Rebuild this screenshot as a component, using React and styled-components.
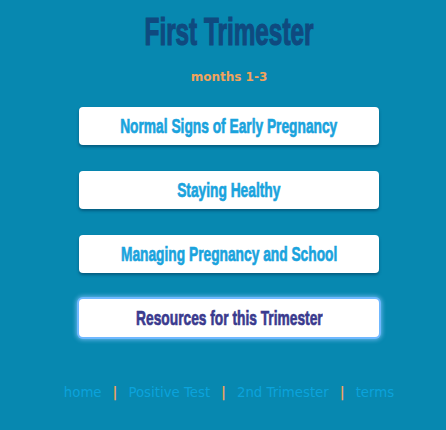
import React from "react";
import styled, { createGlobalStyle } from "styled-components";

const Global = createGlobalStyle`
  html, body { margin: 0; padding: 0; background: #0788b0; }
  body { font-family: "DejaVu Sans", sans-serif; }
`;

const Page = styled.div`
  width: 446px;
  height: 430px;
  box-sizing: border-box;
  padding: 12px 0 0 12px;
  display: flex;
  flex-direction: column;
  align-items: center;
  overflow: hidden;
`;

const Condensed = styled.span`
  display: inline-block;
  transform: scaleX(${(p) => p.$sx || 0.8});
  white-space: nowrap;
  -webkit-text-stroke: ${(p) => p.$stroke || 0}px currentColor;
`;

const Title = styled.h1`
  margin: 0;
  height: 40px;
  line-height: 40px;
  font-family: "Liberation Sans", Arial, sans-serif;
  font-weight: 700;
  font-size: 38px;
  color: #0f4a7f;
  text-align: center;
`;

const Months = styled.div`
  margin-top: 17px;
  font-family: "DejaVu Sans", sans-serif;
  font-weight: 700;
  font-size: 12px;
  color: #f2a35c;
  line-height: 16px;
`;

const Buttons = styled.div`
  margin-top: 22px;
  display: flex;
  flex-direction: column;
  gap: 26px;
`;

const Btn = styled.div`
  width: 300px;
  height: 38px;
  box-sizing: border-box;
  background: #fff;
  border-radius: 4px;
  display: flex;
  align-items: center;
  justify-content: center;
  font-family: "Liberation Sans", Arial, sans-serif;
  font-weight: 700;
  font-size: 21px;
  color: ${(p) => (p.$active ? "#3a3a8e" : "#1aa3dd")};
  box-shadow: ${(p) =>
    p.$active
      ? "0 0 0 2px #6fb8ff, 0 0 4px 3px rgba(140,200,255,0.7)"
      : "0 2px 3px rgba(0,40,70,0.45)"};
`;

const Footer = styled.nav`
  margin-top: 48px;
  display: flex;
  align-items: center;
  gap: 11px;
  font-family: "DejaVu Sans", sans-serif;
  font-size: 13.3px;
  color: #0ba3dc;
`;

const Sep = styled.span`
  color: #f2a35c;
  font-weight: 700;
`;

export default function App() {
  const items = [
    "Normal Signs of Early Pregnancy",
    "Staying Healthy",
    "Managing Pregnancy and School",
    "Resources for this Trimester",
  ];
  const links = ["home", "Positive Test", "2nd Trimester", "terms"];
  return (
    <>
      <Global />
      <Page>
        <Title>
          <Condensed $sx={0.64} $stroke={1.2}>First Trimester</Condensed>
        </Title>
        <Months>months 1-3</Months>
        <Buttons>
          {items.map((t, i) => (
            <Btn key={t} $active={i === 3}>
              <Condensed $sx={0.655} $stroke={0.7}>{t}</Condensed>
            </Btn>
          ))}
        </Buttons>
        <Footer>
          {links.map((l, i) => (
            <React.Fragment key={l}>
              {i > 0 && <Sep>|</Sep>}
              <span>{l}</span>
            </React.Fragment>
          ))}
        </Footer>
      </Page>
    </>
  );
}
